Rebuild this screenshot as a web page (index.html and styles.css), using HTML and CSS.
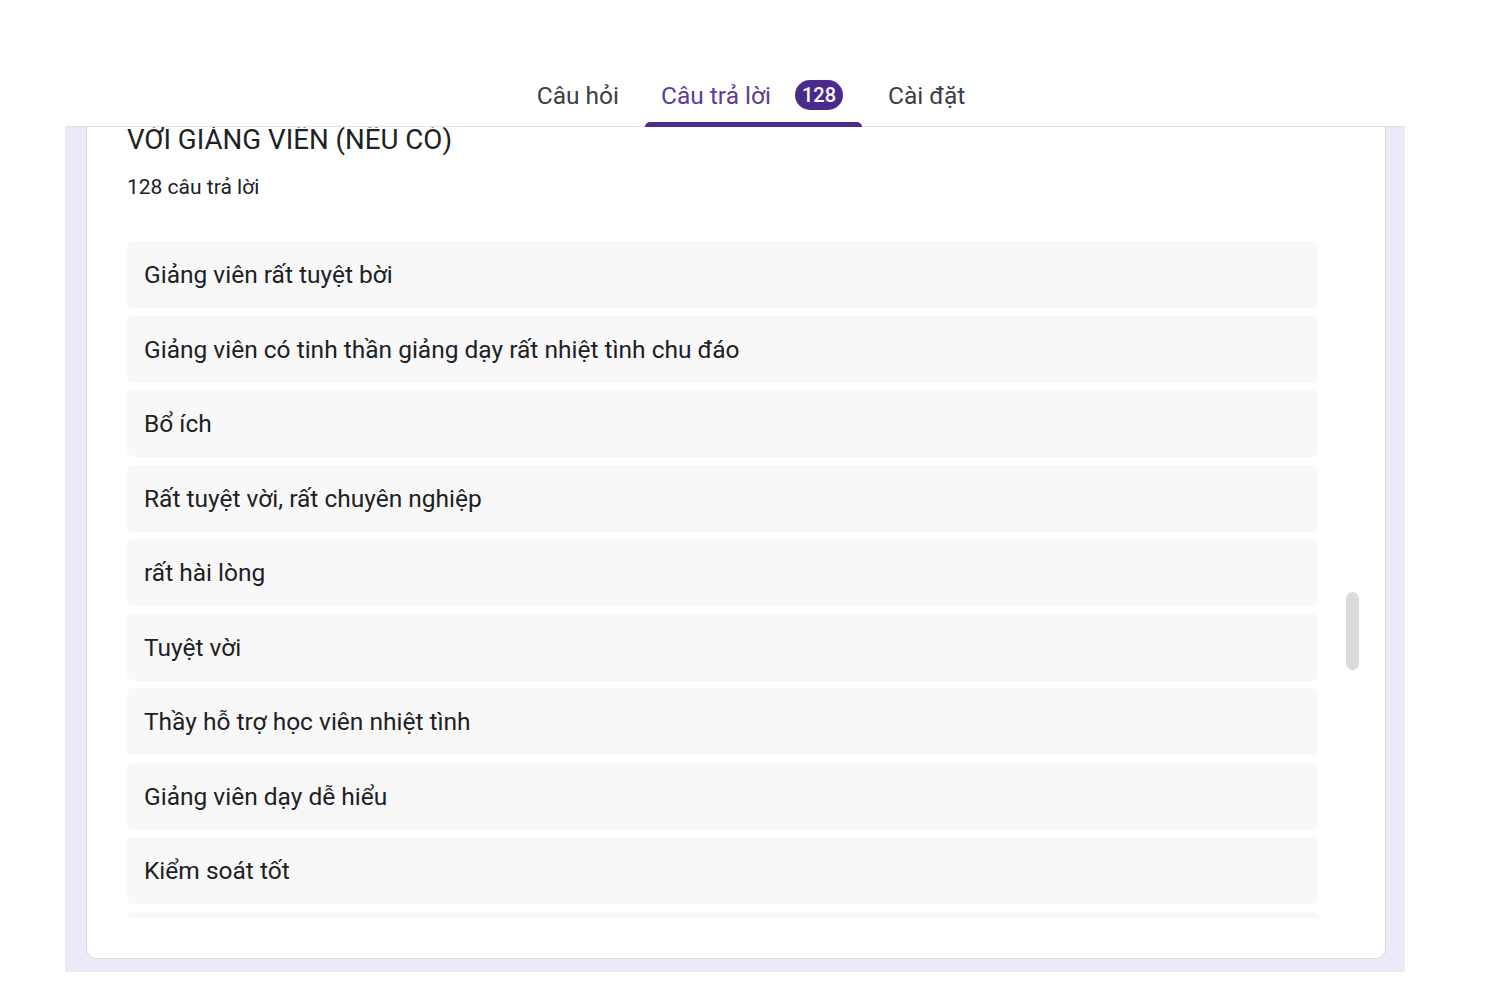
FILE: index.html
```html
<!DOCTYPE html>
<html lang="vi">
	<head>
		<meta charset="UTF-8" />
		<meta name="viewport" content="width=device-width, initial-scale=1.0" />
		<title>Câu trả lời</title>
		<link rel="stylesheet" href="styles.css">
	</head>
	<body>
		<div class="wrapper">
			<header class="tabs-bar">
				<nav class="tabs">
					<a class="tab">Câu hỏi</a>
					<a class="tab active">Câu trả lời <span class="badge">128</span></a>
					<a class="tab">Cài đặt</a>
				</nav>
			</header>

			<main class="content">
				<section class="card">
					<h2 class="question-title">VỚI GIẢNG VIÊN (NẾU CÓ)</h2>
					<p class="count">128 câu trả lời</p>

					<ul class="answers">
						<li class="answer">Giảng viên rất tuyệt bời</li>
						<li class="answer">Giảng viên có tinh thần giảng dạy rất nhiệt tình chu đáo</li>
						<li class="answer">Bổ ích</li>
						<li class="answer">Rất tuyệt vời, rất chuyên nghiệp</li>
						<li class="answer">rất hài lòng</li>
						<li class="answer">Tuyệt vời</li>
						<li class="answer">Thầy hỗ trợ học viên nhiệt tình</li>
						<li class="answer">Giảng viên dạy dễ hiểu</li>
						<li class="answer">Kiểm soát tốt</li>
						<li class="answer">Giảng viên nhiệt tình</li>
						<li class="answer">Hay</li>
					</ul>

					<div class="scroll-thumb"></div>
				</section>
			</main>
		</div>
	</body>
</html>
```

FILE: styles.css
```css
body {
	margin: 0;
	background-color: #ffffff;
	font-family: Roboto, 'Noto Sans', Arial, sans-serif;
	color: #202124;
}

.wrapper {
	width: 1340px;
	margin-left: 65px;
}

/* top tab bar */
.tabs-bar {
	height: 126px;
	border-bottom: 1px solid #e3e3e3;
	display: flex;
	align-items: flex-end;
	justify-content: center;
	background-color: #ffffff;
}

.tabs {
	display: flex;
	gap: 10px;
	padding-left: 32px;
}

.tab {
	display: flex;
	align-items: center;
	gap: 24px;
	height: 62px;
	padding: 0 16px;
	font-size: 24.5px;
	color: #3c4043;
	position: relative;
	box-sizing: border-box;
}

.tab.active {
	color: #5b3e98;
	padding-right: 19px;
}

.tab.active::after {
	content: '';
	position: absolute;
	left: 0;
	right: 0;
	bottom: -1px;
	height: 5px;
	border-radius: 5px 5px 0 0;
	background-color: #4c2c8f;
}

.badge {
	display: inline-flex;
	align-items: center;
	justify-content: center;
	min-width: 48px;
	height: 30px;
	border-radius: 15px;
	background-color: #4b2a8d;
	color: #ffffff;
	font-size: 20px;
	font-weight: 500;
}

/* scrolled response area */
.content {
	background-color: #ede9f8;
	height: 845px;
	overflow: hidden;
	padding: 0 19px 0 21px;
}

.card {
	position: relative;
	background-color: #ffffff;
	border: 1px solid #dadce0;
	border-top: none;
	border-radius: 0 0 10px 10px;
	height: 838px;
	margin-top: -6px;
	padding: 0 67px 0 40px;
	box-sizing: border-box;
}

.question-title {
	margin: 0;
	font-size: 27.7px;
	font-weight: 400;
	line-height: 32px;
	padding-top: 3px;
}

.count {
	margin: 19px 0 0 0;
	font-size: 21px;
	line-height: 24px;
}

.answers {
	list-style: none;
	margin: 42px 0 0 0;
	padding: 0;
	display: flex;
	flex-direction: column;
	gap: 7.5px;
	height: 677px;
	overflow: hidden;
}

.answer {
	flex-shrink: 0;
	height: 67px;
	display: flex;
	align-items: center;
	padding-left: 17px;
	background-color: #f8f8f8;
	border-radius: 6px;
	font-size: 24.5px;
}

.scroll-thumb {
	position: absolute;
	right: 26px;
	top: 471px;
	width: 13px;
	height: 78px;
	border-radius: 7px;
	background-color: #dadcdc;
}
```
